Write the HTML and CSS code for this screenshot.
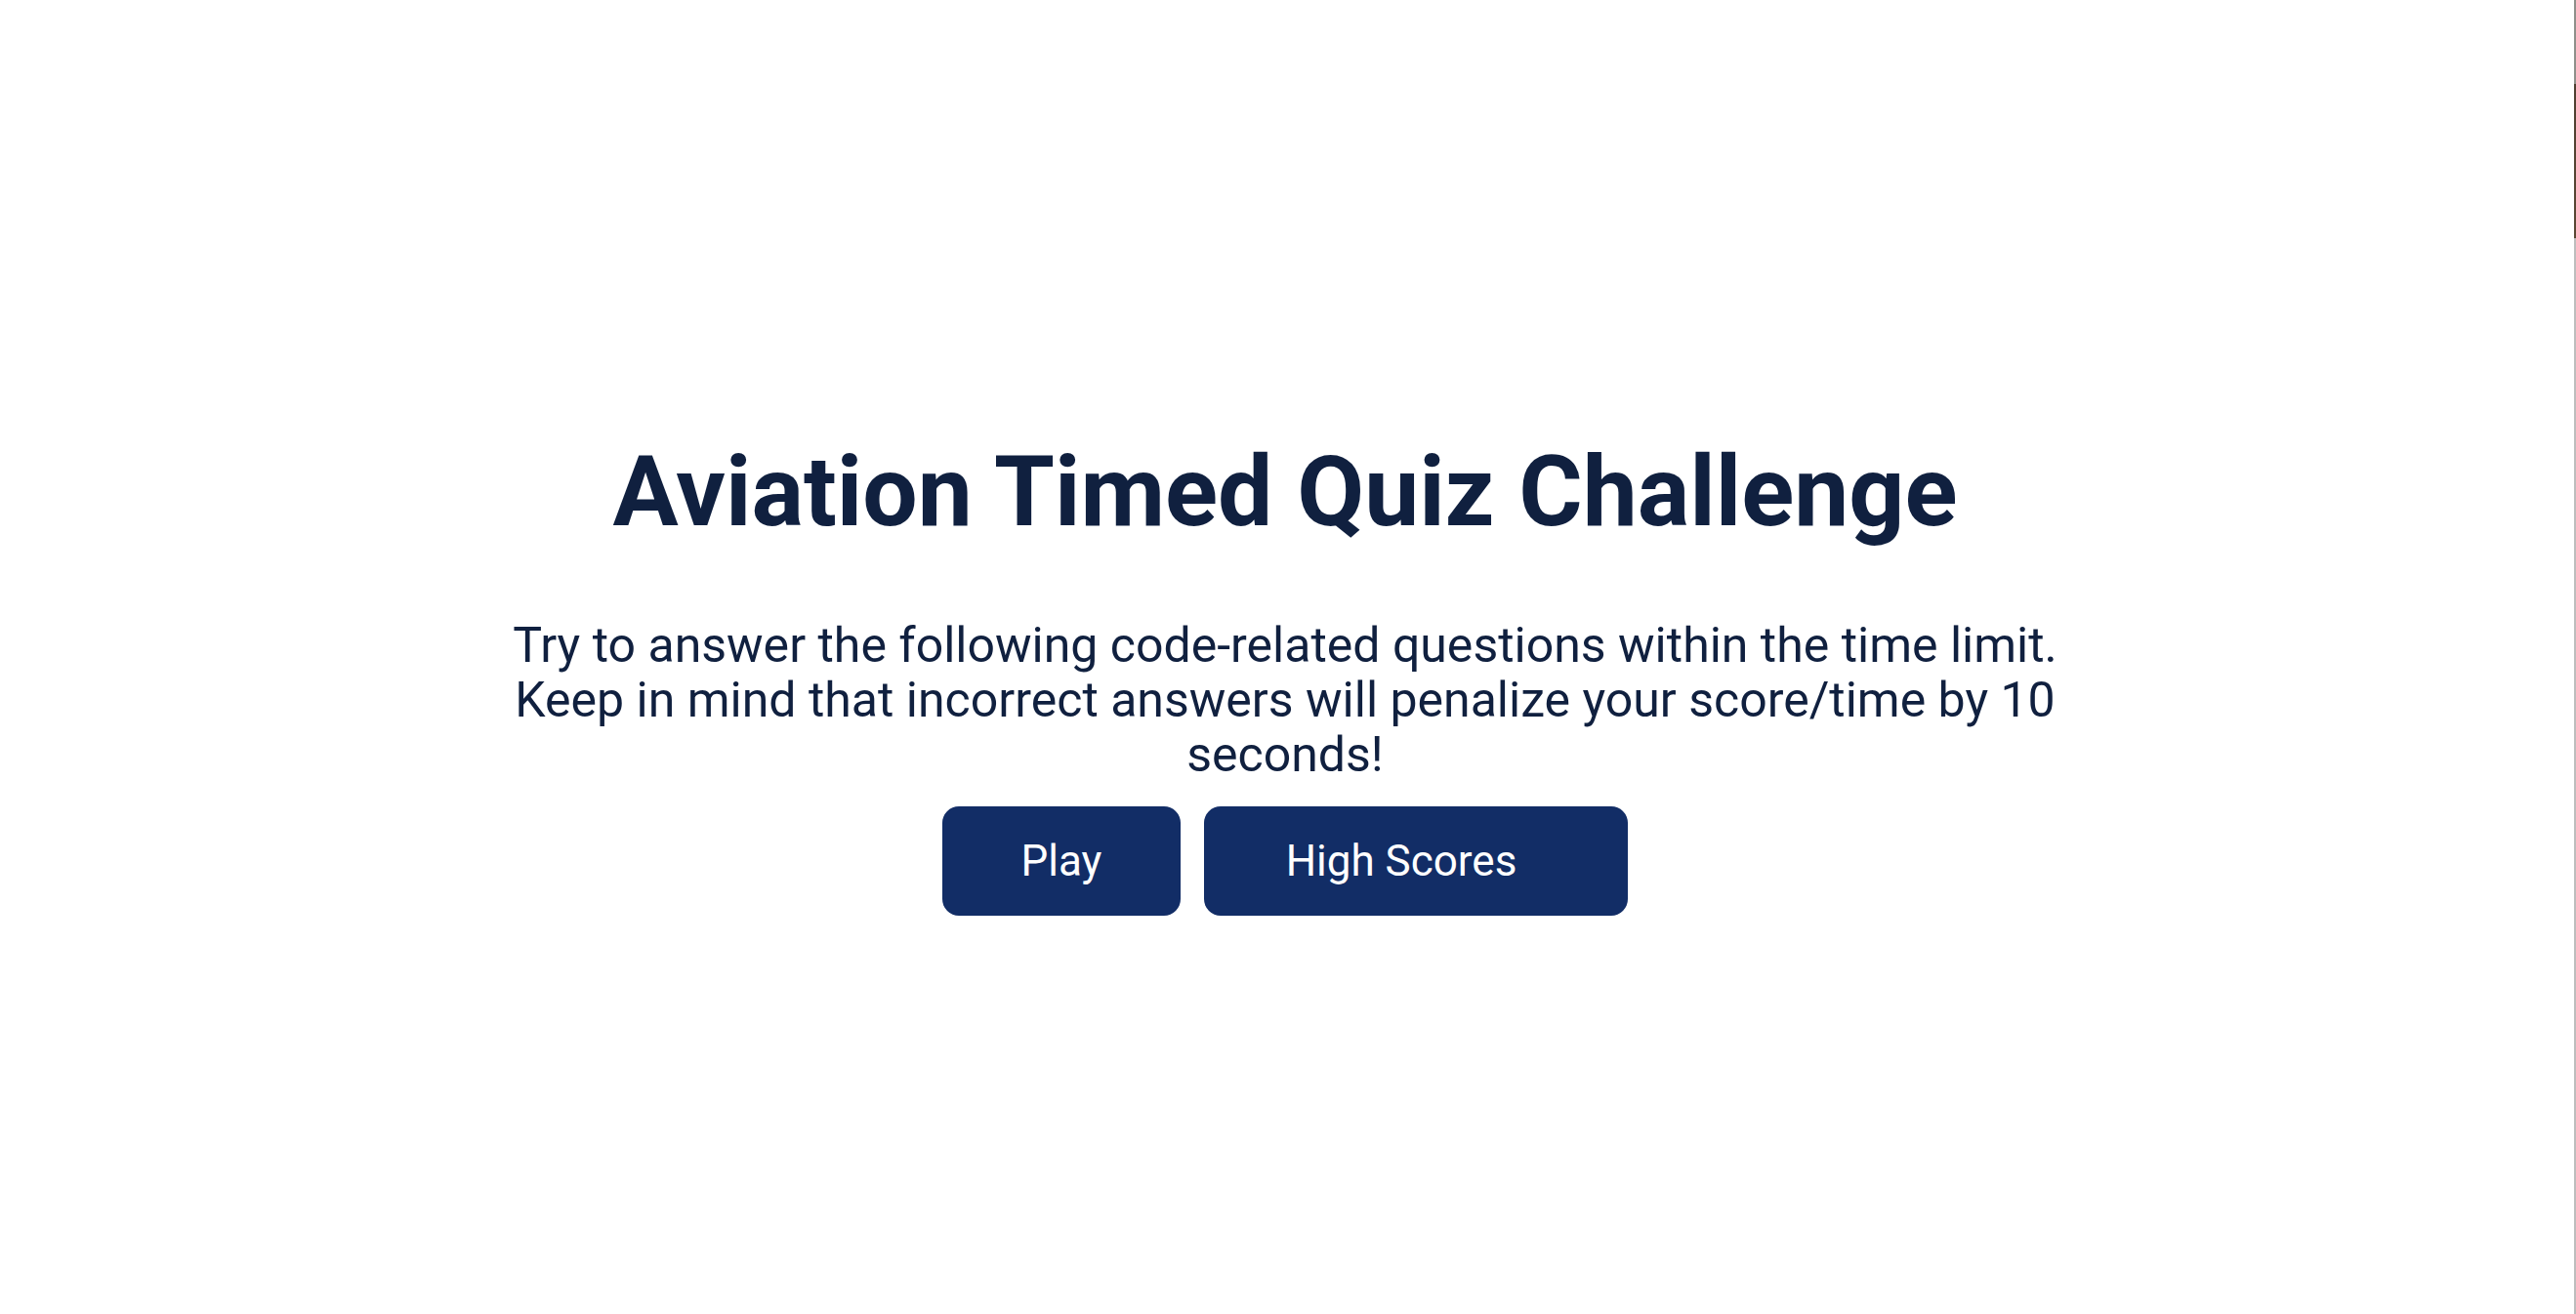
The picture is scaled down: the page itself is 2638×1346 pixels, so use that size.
FILE: index.html
```html
<!DOCTYPE html>
<html lang="en">
<head>
<meta charset="utf-8">
<title>Aviation Timed Quiz Challenge</title>
<link rel="stylesheet" href="styles.css">
</head>
<body>
  <main class="intro">
    <h1 class="intro__title">Aviation Timed Quiz Challenge</h1>
    <p class="intro__text">Try to answer the following code-related questions within the time limit. Keep in mind that incorrect answers will penalize your score/time by 10 seconds!</p>
    <div class="intro__actions">
      <button class="btn btn--play" type="button">Play</button>
      <button class="btn btn--scores" type="button">High Scores</button>
    </div>
  </main>
  <div class="edge-strip" aria-hidden="true"></div>
</body>
</html>
```

FILE: styles.css
```css
* {
  box-sizing: border-box;
}

html, body {
  margin: 0;
  padding: 0;
  background: #ffffff;
}

body {
  font-family: Roboto, "Liberation Sans", Arial, sans-serif;
  color: #10203f;
  min-height: 1346px;
}

.intro {
  display: flex;
  flex-direction: column;
  align-items: center;
  padding-top: 445px;
  padding-right: 6px;
}

.intro__title {
  margin: 0;
  font-size: 100px;
  font-weight: 700;
  line-height: 117px;
  color: #10203f;
}

.intro__text {
  margin: 71px 0 0;
  max-width: 1620px;
  font-size: 50px;
  line-height: 56px;
  text-align: center;
  color: #10203f;
}

.intro__actions {
  display: flex;
  gap: 24px;
  margin-top: 25px;
}

.btn {
  height: 112px;
  border: none;
  border-radius: 17px;
  background: #122d66;
  color: #ffffff;
  font-family: Roboto, "Liberation Sans", Arial, sans-serif;
  font-size: 44px;
  padding: 0;
  cursor: pointer;
}

.btn--play {
  width: 244px;
}

.btn--scores {
  width: 434px;
  padding-right: 30px;
}

.edge-strip {
  position: fixed;
  top: 0;
  right: 0;
  width: 2px;
  height: 100%;
  background: linear-gradient(to bottom, #8f8f8a 0, #8f8f8a 86px, #4e3f31 86px, #5a4734 244px, #bdbdbd 244px, #bdbdbd 100%);
}
```
